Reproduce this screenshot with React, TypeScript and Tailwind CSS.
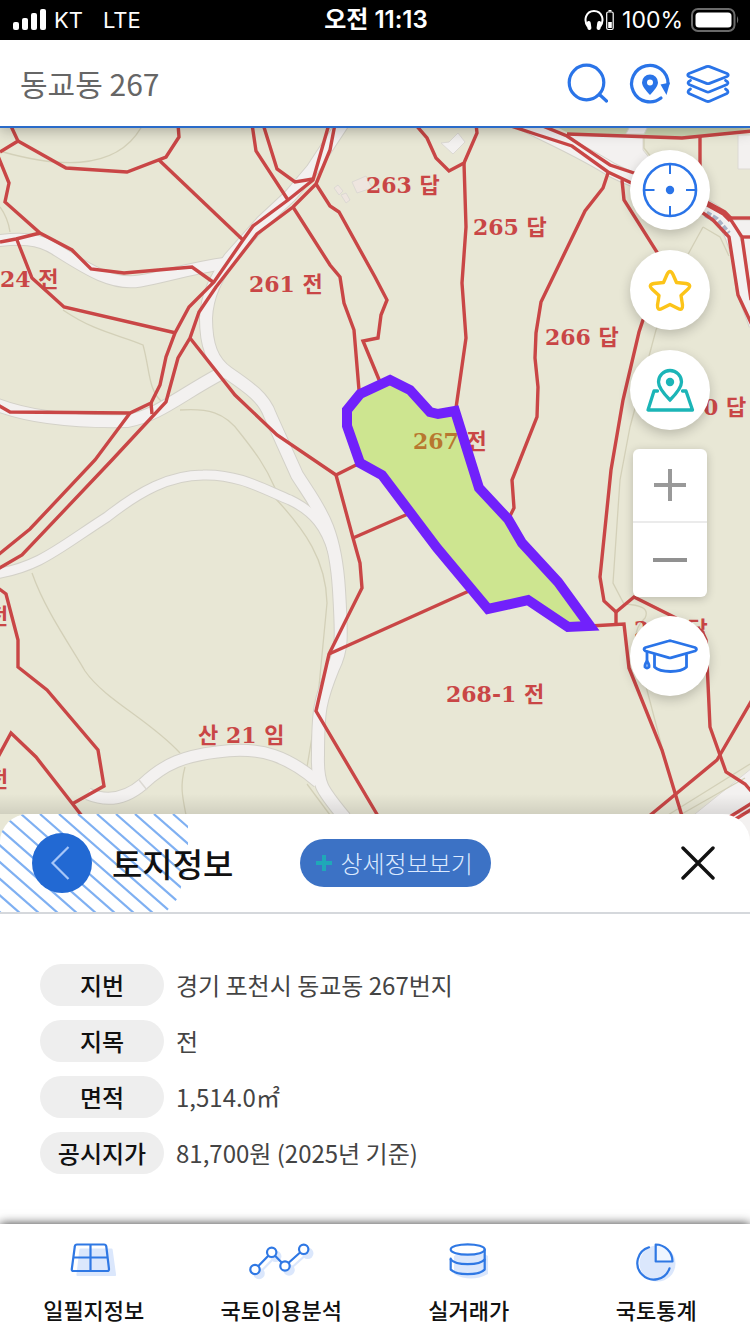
import React, { useState } from 'react';

type Road = { d: string; width: number };

const ROADS: Road[] = [
  { d: 'M-5 241 C20 238 38 238 55 249 C85 268 112 286 140 281 C168 276 190 268 228 263', width: 11 },
  { d: 'M345 120 L312 170 L290 196 L262 222 L230 258 C216 278 207 295 206 318 C206 345 212 362 228 373 C250 388 264 398 270 415 L297 475 C318 508 335 525 339 590 C342 640 342 650 333 668 C320 700 318 710 318 755 C317 785 322 790 345 818', width: 12 },
  { d: 'M-5 404 C30 418 80 422 127 421 C160 415 180 395 222 373', width: 12 },
  { d: 'M-5 574 C40 567 60 547 107 517 C140 491 170 475 203 475 C240 474 265 490 290 500 C315 512 326 528 333 552', width: 9 },
  { d: 'M88 794 C110 803 128 797 143 784 C165 763 185 756 217 752 C262 745 290 758 318 782', width: 11 },
  { d: 'M520 122 C560 142 580 150 612 170 C650 190 690 195 715 212 C735 228 740 260 743 290 L756 325', width: 13 },
];

const CONTOURS = [
  'M3 152 C50 165 115 175 142 126',
  'M0 207 Q8 218 10 232',
  'M63 310 C95 332 120 335 143 345 C150 370 148 390 162 402',
  'M180 410 C207 408 225 412 240 433 C255 452 265 465 275 488 L275 498 C305 530 326 560 327 603 L317 707 L307 767',
  'M32 573 C45 610 70 645 85 671 C105 700 150 720 180 753',
  'M185 767 C180 785 182 795 186 815',
  'M307 784 L330 815',
  'M703 227 L686 258 L656 330 L630 427 L620 480 L613 583 L624 604 C640 605 650 608 645 618 C632 630 634 640 643 675 L676 800',
  'M644 135 L644 148 L655 162',
  'M703 227 L720 237 L729 256',
  'M668 815 L750 764',
  'M680 815 L745 778',
];

const PARCELS = [
  'M0 152 L18 141 L10 124',
  'M18 141 L66 168 L127 172 L166 157 L179 137 L178 124',
  'M159 160 L243 240',
  'M-2 156 L9 183 L5 202 L40 233 L72 250 L91 269 L124 273 L192 267 L213 282',
  'M0 242 L16 239 L40 233',
  'M17 240 L32 278 L64 307 L176 333',
  'M329 124 L313 180 L288 200 L253 226 L243 240 L214 282 L189 307 L175 333 L166 357 L160 385 L151 403 L130 413 L10 412 L-2 405',
  'M335 124 L330 150 L316 184 L293 207 L257 234 L216 287 L199 312 L190 338 L178 358 L166 402 L112 460 L22 555 L-2 569',
  'M130 413 L95 460 L30 529 L-2 555',
  'M151 403 L152 414',
  'M252 124 L256 151 L288 200',
  'M263 124 L277 169 L295 182 L313 179',
  'M293 207 L330 265 L340 277 L344 303 L354 330 L359 390',
  'M316 184 L330 206 L339 212 L375 277 L387 300 L381 315 L378 338 L363 341 L380 382',
  'M190 338 L235 395 L277 435 L336 475 L360 463',
  'M336 475 L353 538 L360 563 L362 588 L329 654 L316 711 L378 816',
  'M353 538 L408 514',
  'M329 654 L469 591',
  'M-2 588 L6 594 L18 640 L18 667 L47 690 L98 750 L104 786 L72 804',
  'M-2 757 L11 733 L36 757 L82 816',
  'M415 124 L427 138 L436 158 L449 171 L464 163 L477 133 L476 124',
  'M464 163 L466 227 L462 283 L466 338 L456 408',
  'M608 173 L603 188 L585 211 L541 302 L536 333 L535 358 L538 387 L537 417 L512 480 L514 508 L509 518',
  'M505 124 L535 134 L572 146 L608 172 L640 187 L703 213 L713 220 L729 237 L738 295 L752 325',
  'M538 124 L567 136 L610 165 L640 175 L708 204 L723 213 L731 220 L742 237 L751 300',
  'M567 134 L682 138 L752 131',
  'M700 137 L700 185',
  'M731 218 L752 218',
  'M742 237 L752 237',
  'M622 180 L624 200 L660 257 L655 295 L643 320 L639 332 L623 400 L611 470 L600 577 L604 601 L616 612 L634 597 L702 631 L706 640 L710 727 L726 772 L745 784 L752 792',
  'M616 612 L616 624',
  'M590 626 L624 624 L629 668 L662 750 L682 816',
  'M752 700 L717 760 L648 817',
  'M752 803 L728 818',
  'M752 809 L734 820',
];

const LABELS = [
  { x: 366, y: 193, text: '263 답' },
  { x: 473, y: 235, text: '265 답' },
  { x: 249, y: 292, text: '261 전' },
  { x: 0, y: 287, text: '24 전' },
  { x: 545, y: 345, text: '266 답' },
  { x: 703, y: 415, text: '0 답' },
  { x: 413, y: 449, text: '267 전' },
  { x: 446, y: 702, text: '268-1 전' },
  { x: 198, y: 743, text: '산 21 임' },
  { x: 634, y: 637, text: '269 답' },
  { x: -12, y: 624, text: '전' },
  { x: -12, y: 787, text: '전' },
];

const DETAILS = [
  { label: '지번', value: '경기 포천시 동교동 267번지' },
  { label: '지목', value: '전' },
  { label: '면적', value: '1,514.0㎡' },
  { label: '공시지가', value: '81,700원 (2025년 기준)' },
];

const StatusBar = () => (
  <div className="grid h-10 grid-cols-3 items-center bg-black pr-2.5 pl-3 font-['Inter','Noto_Sans_CJK_KR',sans-serif] text-[22px] leading-none text-white">
    <div className="flex items-center gap-2">
      <svg width="34" height="22" viewBox="0 0 34 22" fill="white">
        <rect x="1" y="13" width="6" height="8" rx="2" />
        <rect x="10" y="9" width="6" height="12" rx="2" />
        <rect x="19" y="4" width="6" height="17" rx="2" />
        <rect x="28" y="0" width="6" height="21" rx="2" />
      </svg>
      <span>KT</span>
      <span className="ml-3">LTE</span>
    </div>
    <div className="text-center text-2xl leading-none font-semibold">오전 11:13</div>
    <div className="flex items-center justify-end gap-2 text-[23px]">
      <svg width="30" height="22" viewBox="0 0 30 22" fill="none">
        <path d="M4 18 C-1 11 2 2 10 2 C18 2 21 11 16 18" stroke="white" strokeWidth="2" />
        <rect x="3" y="12" width="4" height="9" rx="2" fill="white" transform="rotate(-8 5 16)" />
        <rect x="13" y="12" width="4" height="9" rx="2" fill="white" transform="rotate(8 15 16)" />
        <rect x="22.7" y="3" width="6.5" height="17.5" rx="1.5" stroke="white" strokeWidth="1.2" />
        <rect x="24.5" y="1" width="3" height="1.5" fill="white" />
        <rect x="24.2" y="13" width="3.6" height="6" fill="white" />
      </svg>
      <span>100%</span>
      <svg width="49" height="24" viewBox="0 0 49 24" fill="none">
        <rect x="1" y="1" width="42.5" height="22" rx="6" stroke="#6b6b6b" strokeWidth="2" />
        <rect x="4.5" y="4.5" width="36" height="15" rx="3.5" fill="white" />
        <path d="M46 8 Q48.5 12 46 15.5Z" fill="#6b6b6b" />
      </svg>
    </div>
  </div>
);

const SearchBar = () => {
  const [query, setQuery] = useState('동교동 267');

  return (
    <header className="relative z-10 flex h-[88px] items-center border-b-2 border-[#2a6bc9] bg-white px-5 shadow-[0_2px_14px_rgba(0,0,0,0.3)]">
      <input
        type="text"
        aria-label="주소 검색"
        value={query}
        onChange={e => setQuery(e.target.value)}
        className="min-w-0 flex-1 text-[30px] leading-10 text-[#666] outline-none"
      />
      <div className="flex items-center gap-[18px]">
        <button aria-label="검색">
          <svg width="42" height="42" viewBox="-1 -1 42 42" fill="none" stroke="#2a74e8" strokeWidth="3.2" strokeLinecap="round">
            <circle cx="19.5" cy="19.5" r="17.3" />
            <path d="M33 32 L39.5 38" />
          </svg>
        </button>
        <button aria-label="위치 새로고침">
          <svg width="42" height="42" viewBox="-3 0 42 42" fill="none" className="overflow-visible">
            <path d="M39 21.5 A18.2 18.2 0 1 0 32 36" stroke="#2a74e8" strokeWidth="3.2" strokeLinecap="round" />
            <path d="M31.5 22.5 L41 20.5 L37.5 33Z" fill="#2a74e8" />
            <path
              d="M21 33 C16.500 28 13 24 13 20.5 A8 8 0 0 1 29 20.5 C29 24 25.500 28 21 33Z M21 17.5 A3 3 0 1 0 21 23.5 A3 3 0 1 0 21 17.5Z"
              fill="#2a74e8"
              fillRule="evenodd"
            />
          </svg>
        </button>
        <button aria-label="레이어">
          <svg width="44" height="42" viewBox="0 -1 44 42" fill="none" stroke="#2a74e8" strokeWidth="2.8" strokeLinejoin="round" strokeLinecap="round">
            <path d="M20.5 3.6 Q22 3 23.5 3.6 L41 10.5 Q43.5 12 41 13.5 L23.5 20.4 Q22 21 20.5 20.4 L3 13.5 Q0.5 12 3 10.5Z" />
            <path d="M4.5 17.5 Q0.5 19.5 3 21.5 L20.5 28.8 Q22 29.4 23.5 28.8 L41 21.5 Q43.5 19.5 39.5 17.5" />
            <path d="M4.5 26 Q0.500 28.5 3 30.5 L20.5 38.2 Q22 38.8 23.5 38.2 L41 30.5 Q43.5 28.5 39.5 26" />
          </svg>
        </button>
      </div>
    </header>
  );
};

const ParcelMap = () => (
  <svg
    className="absolute inset-0 h-full w-full"
    viewBox="0 128 750 714"
    preserveAspectRatio="xMidYMin slice"
    fill="none"
  >
    <rect y="100" width="750" height="760" fill="#e8e7d5" />
    <path d="M555 126 L752 126 L752 131 L682 138 L570 134Z" fill="#cdd6b2" />
    <g stroke="#dcd9d3" fill="#f3f1f0">
      <path d="M567 135 L643 137 L643 150 L655 165 L640 175 L612 165Z" />
      <path d="M738 135 H752 V169 H738Z" />
      <path d="M731 220 H752 V300 L742 237Z" />
      <path d="M690 818 L752 768 V842 H690Z" />
      <path d="M630 126 H648 L644 134 H626Z" />
      <path d="M441 143 L449 142 L458 133 L465 142 L453 154Z" />
      <path d="M352 182 L366 176 L372 188 L357 193Z" fill="#eee5df" />
      <path d="M334 188 L338 185 L343 191 L339 195Z M341 195 L346 193 L350 200 L346 203Z" fill="#eee5df" />
    </g>
    <g stroke="#d3d0b8" strokeWidth="1.3">
      {CONTOURS.map(d => <path key={d} d={d} />)}
    </g>
    <g stroke="#d3d1c8">
      {ROADS.map(road => <path key={road.d} d={road.d} strokeWidth={road.width + 2} />)}
    </g>
    <g stroke="#f3f1f0">
      {ROADS.map(road => <path key={road.d} d={road.d} strokeWidth={road.width} />)}
    </g>
    <path d="M139 780 L147 790" stroke="#dcd9d3" strokeWidth="1.5" />
    <path d="M706 214 L716 220 L728 234" stroke="#aab3c6" strokeWidth="7" strokeDasharray="5 2" />
    <path d="M706 203 L724 213 L731 220" stroke="#c94646" strokeWidth="6" />
    <g stroke="#c94646" strokeWidth="3.4">
      {PARCELS.map(d => <path key={d} d={d} />)}
    </g>
    <g fill="#c94646" className="font-['DejaVu_Serif','Noto_Sans_CJK_KR',serif] text-[22px] font-bold">
      {LABELS.map(label => (
        <text key={`${label.text}-${label.x}-${label.y}`} x={label.x} y={label.y}>{label.text}</text>
      ))}
    </g>
    {/* selected parcel */}
    <path
      d="M390 380 L410 390 L430 412 L438 414 L455 411 L479 488 L508 519 L522 543 L558 582 L590 626 L568 627 L528 600 L488 609 L437 548 L382 475 L360 463 L347 426 L347 410 L360 394Z"
      fill="#96e100"
      fillOpacity="0.32"
      stroke="#7121fb"
      strokeWidth="10"
    />
  </svg>
);

const RoundButton = ({ label, children }: { label: string; children: React.ReactNode }) => (
  <button aria-label={label} className="h-20 w-20 rounded-full bg-white shadow-[0_4px_12px_rgba(0,0,0,0.2)]">
    <svg width="80" height="80" viewBox="0 0 80 80" fill="none" strokeLinecap="round" strokeLinejoin="round">
      {children}
    </svg>
  </button>
);

const MapControls = () => (
  <div className="absolute top-[22px] right-10 flex flex-col items-center gap-[19px]">
    <div className="flex flex-col gap-5">
      <RoundButton label="현재 위치">
        <g stroke="#2a74e8" strokeWidth="2.6" strokeLinecap="butt">
          <circle cx="40" cy="40" r="26" />
          <path d="M40 14 V24 M40 56 V66 M14 40 H24.5 M56 40 H66" strokeWidth="2" />
        </g>
        <circle cx="40" cy="40" r="4.2" fill="#2a74e8" />
      </RoundButton>
      <RoundButton label="즐겨찾기">
        <path
          d="M37 24.5 Q40 18.5 43 24.5 L46.5 32.5 L56 33.5 Q62.5 35 57.500 39.500 L51 45.5 L52.500 55 Q53 61 48 58.500 L40 54.500 L32 58.500 Q27 61 27.500 55 L29 45.5 L22.500 39.500 Q17.500 35 24 33.5 L33.5 32.5Z"
          stroke="#fcc419"
          strokeWidth="3.4"
        />
      </RoundButton>
      <RoundButton label="지도 선택">
        <g stroke="#1bb5b7" strokeWidth="3.3">
          <path d="M40 50 C33 43 28.5 37.5 28.5 32 A11.5 11.5 0 0 1 51.5 32 C51.5 37.5 47 43 40 50Z" strokeLinejoin="miter" />
          <path d="M27.500 41 H24 L18 60 H62.5 L56 41 H52.5" />
        </g>
        <circle cx="40" cy="32" r="4.2" fill="#1bb5b7" />
      </RoundButton>
    </div>
    <div className="flex w-[74px] flex-col divide-y-2 divide-[#ebebeb] overflow-hidden rounded-md bg-white shadow-[0_2px_10px_rgba(0,0,0,0.2)]">
      <button aria-label="확대" className="flex h-[74px] items-center justify-center">
        <svg width="34" height="34" viewBox="0 0 34 34" stroke="#999" strokeWidth="4">
          <path d="M17 1 V33 M1 17 H33" />
        </svg>
      </button>
      <button aria-label="축소" className="flex h-[74px] items-center justify-center">
        <svg width="34" height="34" viewBox="0 0 34 34" stroke="#919191" strokeWidth="4">
          <path d="M0 17 H34" />
        </svg>
      </button>
    </div>
    <RoundButton label="이용 안내">
      <g stroke="#2a74e8" strokeWidth="2.8">
        <path d="M38.5 25 Q40 24.5 41.5 25 L65 31.5 Q68 33 65 35 L41.5 41.7 Q40 42.2 38.5 41.7 L15.5 35 Q12.5 33 15.5 31.5Z" />
        <path d="M24.5 39 V51 Q29 55.5 40.5 55.5 Q52 55.5 56.5 51 V39" />
        <path d="M17 36 V45" />
        <path d="M17 45 Q14.5 48.5 15 51 Q17 53 19 51 Q19.5 48.5 17 45Z" />
      </g>
    </RoundButton>
  </div>
);

const LandSheet = () => (
  <section className="relative -mt-7 overflow-hidden rounded-t-[28px] bg-white">
    <div className="relative flex h-[100px] items-center border-b-2 border-[#d5d8dc] px-8">
      <svg className="absolute top-0 left-0" width="190" height="98" viewBox="0 0 190 98" fill="none">
        <clipPath id="hatch">
          <path d="M0 0 H188 V38 L184 62 L178 84 L166 98 H0Z" />
        </clipPath>
        <g clipPath="url(#hatch)" stroke="#7fb0f2" strokeWidth="2.2">
          {Array.from({ length: 16 }, (_, i) => {
            const x = i * 19 - 112;
            return <path key={x} d={`M${x} 0 L${x + 114} 100`} />;
          })}
        </g>
      </svg>
      <button aria-label="뒤로" className="relative h-[60px] w-[60px] rounded-full bg-[#2269d3]">
        <svg width="60" height="60" viewBox="0 0 60 60" fill="none" stroke="#a6c6f8" strokeWidth="2.2">
          <path d="M36.5 14 L20.5 30 L36.5 46" />
        </svg>
      </button>
      <h1 className="relative ml-5 text-[33px] leading-10 font-medium text-[#111]">토지정보</h1>
      <button className="ml-[67px] flex h-12 items-center gap-2 rounded-full bg-[#3c72c5] pr-[18px] pl-4 text-2xl font-light whitespace-nowrap text-[#dceaff]">
        <svg width="16" height="16" viewBox="0 0 16 16" stroke="#1fa8b8" strokeWidth="4">
          <path d="M8 0 V16 M0 8 H16" />
        </svg>
        상세정보보기
      </button>
      <button aria-label="닫기" className="ml-auto flex h-10 w-10 items-center justify-center">
        <svg width="34" height="34" viewBox="0 0 34 34" stroke="#111" strokeWidth="3.4" strokeLinecap="round">
          <path d="M2 2 L32 32 M32 2 L2 32" />
        </svg>
      </button>
    </div>
    <dl className="flex flex-col gap-[14px] px-10 py-[50px] text-2xl">
      {DETAILS.map(item => (
        <div key={item.label} className="flex items-center gap-3">
          <dt className="flex h-[42px] w-[124px] items-center justify-center rounded-full bg-[#eee] font-medium text-[#111]">
            {item.label}
          </dt>
          <dd className="text-[#444]">{item.value}</dd>
        </div>
      ))}
    </dl>
  </section>
);

const ParcelIcon = () => (
  <>
    <path d="M18.5 9.5 H49.5 L53 35 H15.5Z" fill="#dbe7fc" stroke="#dbe7fc" />
    <path d="M15 4.5 H42 Q44 4.5 44.3 6.5 L47 29 Q47.2 31 45.2 31 H11.5 Q9.5 31 9.8 29 L12.8 6.5 Q13 4.5 15 4.5Z M28.5 4.5 V31 M11.5 17.5 H45.500" />
  </>
);

const ChartIcon = () => (
  <>
    <g stroke="#dbe7fc" fill="#dbe7fc" transform="translate(4 4)">
      <path d="M6 29.5 L22.7 12.3 L36 26 L54.7 9.3" fill="none" />
      <circle cx="6" cy="29.5" r="4.7" />
      <circle cx="22.7" cy="12.3" r="4.7" />
      <circle cx="36" cy="26" r="4.7" />
      <circle cx="54.7" cy="9.3" r="4.7" />
    </g>
    <path d="M6 29.5 L22.7 12.3 L36 26 L54.7 9.3" />
    <g fill="white">
      <circle cx="6" cy="29.5" r="4.7" />
      <circle cx="22.7" cy="12.3" r="4.7" />
      <circle cx="36" cy="26" r="4.7" />
      <circle cx="54.7" cy="9.3" r="4.7" />
    </g>
  </>
);

const PriceIcon = () => (
  <>
    <path d="M17 16 Q34 6 51 16 V34 Q34 43 17 34Z" fill="#dbe7fc" stroke="none" />
    <ellipse cx="30.7" cy="9.5" rx="17" ry="5.2" fill="white" />
    <path d="M47.7 9.5 V29.5 Q44 34 30.7 34.2 Q17.5 34 13.7 29.5 V18.5" />
    <path d="M13.7 19.5 Q17.5 24 30.7 24.2 Q44 24 47.7 19.5" />
  </>
);

const StatsIcon = () => (
  <>
    <circle cx="33.500" cy="23.5" r="18" fill="#dbe7fc" stroke="none" />
    <path d="M31.7 4.5 V21.5 H48.5 A17 17 0 0 0 31.7 4.5Z" fill="#eff5ff" />
    <path d="M25 7.3 A16.5 16.5 0 1 0 45.5 28.3" />
  </>
);

const TABS = [
  { label: '일필지정보', icon: <ParcelIcon /> },
  { label: '국토이용분석', icon: <ChartIcon /> },
  { label: '실거래가', icon: <PriceIcon /> },
  { label: '국토통계', icon: <StatsIcon /> },
];

const BottomNav = () => (
  <nav className="relative z-10 grid h-[110px] grid-cols-4 bg-white shadow-[0_0_10px_rgba(0,0,0,0.8)]">
    {TABS.map(tab => (
      <button key={tab.label} className="flex flex-col items-center gap-[14px] pt-4 text-[22px] leading-[30px] font-medium text-[#111]">
        <svg width="64" height="40" viewBox="0 0 64 40" fill="none" stroke="#2f78e4" strokeWidth="2.2" strokeLinecap="round" strokeLinejoin="round" className="overflow-visible">
          {tab.icon}
        </svg>
        {tab.label}
      </button>
    ))}
  </nav>
);

export default function App() {
  return (
    <div className="flex min-h-screen flex-col bg-white font-['Noto_Sans_CJK_KR',sans-serif]">
      <StatusBar />
      <SearchBar />
      <main className="relative min-h-[660px] flex-1 overflow-hidden">
        <ParcelMap />
        <div className="absolute inset-x-0 bottom-7 h-5 bg-linear-to-t from-black/10 to-transparent" />
        <MapControls />
      </main>
      <LandSheet />
      <BottomNav />
    </div>
  );
}
